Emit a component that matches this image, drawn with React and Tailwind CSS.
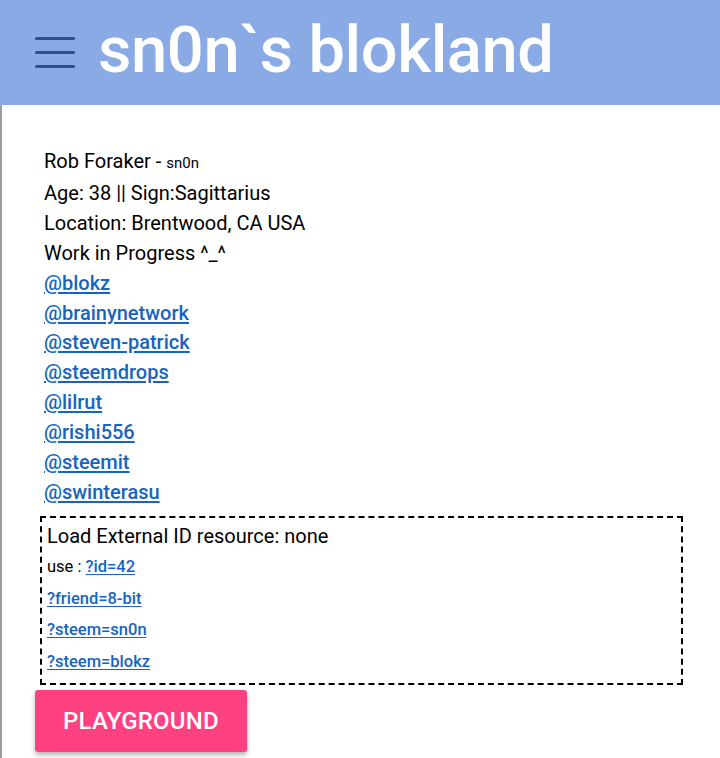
import React from 'react';

const friends = ['blokz', 'brainynetwork', 'steven-patrick', 'steemdrops', 'lilrut', 'rishi556', 'steemit', 'swinterasu'];

export default function App() {
    return (
        <div className="min-h-screen bg-white font-['Roboto',sans-serif] text-black">
            {/* header bar */}
            <header className="h-[105px] bg-[#8aaae6] flex items-center pl-[35px]">
                <div className="w-10 flex flex-col gap-[11px]">
                    <span className="block h-[3px] bg-[#2c4f8e] rounded-sm"></span>
                    <span className="block h-[3px] bg-[#2c4f8e] rounded-sm"></span>
                    <span className="block h-[3px] bg-[#2c4f8e] rounded-sm"></span>
                </div>
                <h1 className="ml-[23px] text-white text-[65px] font-medium leading-none tracking-[-0.4px] pb-[4px]">
                    sn0n`s blokland
                </h1>
            </header>

            {/* content */}
            <main className="border-l-2 border-[#9e9e9e] min-h-[653px] pt-[42px] pl-[38px] pr-[37px]">
                <div className="pl-1 text-[20px] leading-[29.9px]">
                    <div>Rob Foraker - <span className="text-[15px]">sn0n</span></div>
                    <div>Age: 38 || Sign:Sagittarius</div>
                    <div>Location: Brentwood, CA USA</div>
                    <div>Work in Progress ^_^</div>
                    {friends.map((f) => (
                        <div key={f}>
                            <a href="#" className="font-medium text-[#1565c0] underline underline-offset-2">@{f}</a>
                        </div>
                    ))}
                </div>

                <div className="mt-[8px] border-2 border-dashed border-black pl-[5px] pt-[3px] pb-[5px]">
                    <div className="text-[20px] leading-[30px]">Load External ID resource: none</div>
                    <div className="text-[16.5px] leading-[31.7px]">
                        use : <a href="#" className="font-medium text-[#1565c0] underline underline-offset-2">?id=42</a>
                    </div>
                    <div className="text-[16.5px] leading-[31.7px]">
                        <a href="#" className="font-medium text-[#1565c0] underline underline-offset-2">?friend=8-bit</a>
                    </div>
                    <div className="text-[16.5px] leading-[31.7px]">
                        <a href="#" className="font-medium text-[#1565c0] underline underline-offset-2">?steem=sn0n</a>
                    </div>
                    <div className="text-[16.5px] leading-[31.7px]">
                        <a href="#" className="font-medium text-[#1565c0] underline underline-offset-2">?steem=blokz</a>
                    </div>
                </div>

                <button className="mt-[5px] -ml-[5px] h-[62px] px-[28px] rounded-[3px] bg-[#ff4081] text-white text-[24px] font-medium tracking-[0.2px] shadow-[0_3px_5px_rgba(0,0,0,0.3)]">
                    PLAYGROUND
                </button>
            </main>
        </div>
    );
}
